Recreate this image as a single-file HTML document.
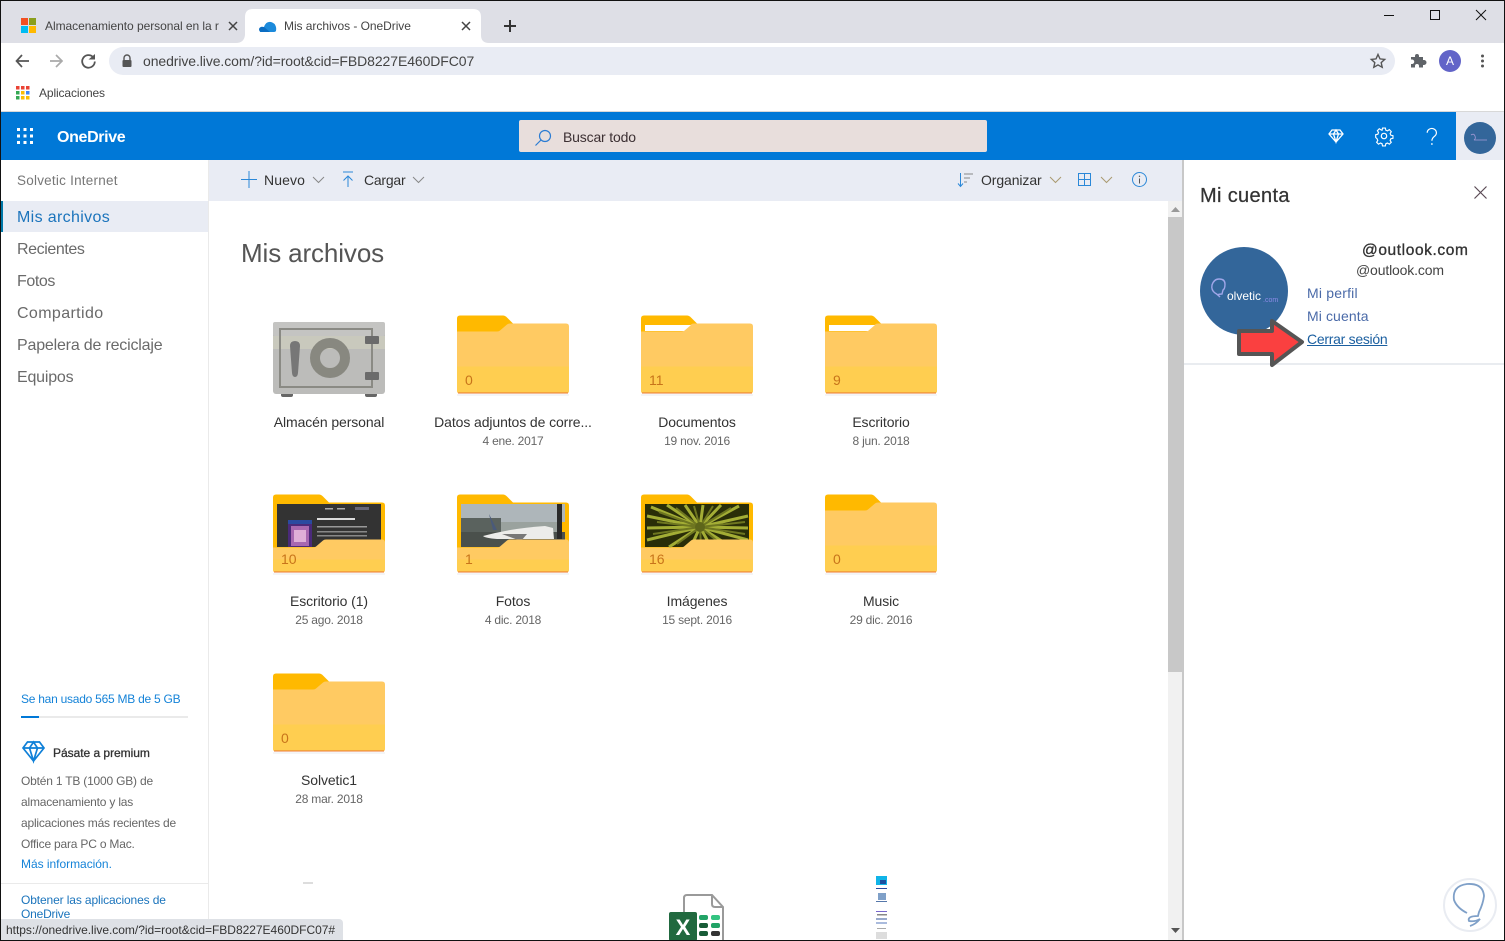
<!DOCTYPE html>
<html lang="es"><head><meta charset="utf-8"><title>Mis archivos - OneDrive</title>
<style>
html,body{margin:0;padding:0;width:1505px;height:941px;overflow:hidden;background:#fff;font-family:"Liberation Sans",sans-serif}
.a{position:absolute}
.t{position:absolute;white-space:nowrap;line-height:1;color:#333}
.c{position:absolute;width:184px;text-align:center;white-space:nowrap;line-height:1}
.n{font-size:14px;color:#333;letter-spacing:-.1px}
.d{font-size:12px;color:#666;letter-spacing:-.22px}
.k{position:absolute;font-size:14px;line-height:1;color:#c8741a}
.nav{font-size:16px;color:#6a6a6a;left:17px}
.side{font-size:12px;left:21px;color:#666;letter-spacing:-.2px}
svg{position:absolute;overflow:visible}
</style></head><body>
<svg width="0" height="0" style="left:0;top:0"><defs>
<symbol id="f" viewBox="0 0 112 79" overflow="visible">
<path d="M0 79h112v-1H0z" fill="#e9ebef" transform="translate(0,1)"/>
<path d="M3 0H46q2 0 4 2l6 6H0V3q0-3 3-3z" fill="#FFB900"/><path d="M0 8h56l-10 8H0z" fill="#FFB900"/>
<path d="M0 16H40q2 0 3-1l7-6q1-1 3-1h56q3 0 3 3V75q0 3-3 3H3q-3 0-3-3z" fill="#FFCA62"/>
<path d="M0 51h112V75q0 3-3 3H3q-3 0-3-3z" fill="#FFCE50"/><rect x="1" y="77" width="110" height="1" fill="#E8752D"/>
</symbol>
<symbol id="g" viewBox="0 0 112 79" overflow="visible">
<path d="M0 79h112v-1H0z" fill="#e9ebef" transform="translate(0,1)"/>
<path d="M3 0H46q2 0 4 2l6 6h53q3 0 3 3V60H0V3q0-3 3-3z" fill="#FFB900"/>
</symbol>
<symbol id="h" viewBox="0 0 112 79" overflow="visible">
<path d="M0 53H40q2 0 3-1l7-6q1-1 3-1h56q3 0 3 3V75q0 3-3 3H3q-3 0-3-3z" fill="#FFCA62"/>
<path d="M0 65h112V75q0 3-3 3H3q-3 0-3-3z" fill="#FFCE50"/><rect x="1" y="77" width="110" height="1" fill="#E8752D"/>
</symbol>
</defs></svg>

<!-- Tab strip -->
<div class="a" style="left:0;top:0;width:1505px;height:43px;background:#DEDFE6"></div>
<svg style="left:0;top:0" width="520" height="44"><path d="M236 43q8 0 9-8V17q0-8 8-8H473q8 0 8 8V35q0 8 8 8z" fill="#fff"/></svg>
<div class="a" style="left:21px;top:18px;width:7px;height:7px;background:#F25022"></div>
<div class="a" style="left:29px;top:18px;width:7px;height:7px;background:#8B9F1D"></div>
<div class="a" style="left:21px;top:26px;width:7px;height:7px;background:#00BCF2"></div>
<div class="a" style="left:29px;top:26px;width:7px;height:7px;background:#FFB900"></div>
<div class="t" style="left:45px;top:20px;font-size:12px;color:#444;letter-spacing:-.05px;width:174px;overflow:hidden">Almacenamiento personal en la r</div>
<svg style="left:228px;top:21px" width="10" height="10"><path d="M1 1l8 8M9 1l-8 8" stroke="#444" stroke-width="1.5"/></svg>
<svg style="left:259px;top:19px" width="18" height="14"><path d="M1 13q-1-5 4-5q2-6 7-5q4 1 5 5q1 5-2 5z" fill="#1B8ADB"/><path d="M0 10q1-3 5-2l6 5H3q-3 0-3-3z" fill="#0B6DC2"/></svg>
<div class="t" style="left:284px;top:20px;font-size:12px;color:#444;letter-spacing:-.05px">Mis archivos - OneDrive</div>
<svg style="left:461px;top:21px" width="10" height="10"><path d="M1 1l8 8M9 1l-8 8" stroke="#444" stroke-width="1.5"/></svg>
<svg style="left:503px;top:19px" width="14" height="14"><path d="M7 1v12M1 7h12" stroke="#333" stroke-width="2"/></svg>
<svg style="left:1384px;top:9px" width="110" height="14"><path d="M0 6.5h10" stroke="#111" stroke-width="1"/><rect x="46.5" y="1.5" width="9" height="9" fill="none" stroke="#111"/><path d="M92 1l10 10M102 1L92 11" stroke="#111"/></svg>

<!-- Toolbar -->
<svg style="left:15px;top:53px" width="85" height="16"><path d="M14 8H2M7 2L1.5 8 7 14" fill="none" stroke="#555" stroke-width="1.7"/><path d="M47 8H35M41 2l6 6-6 6" fill="none" stroke="#aaa" stroke-width="1.7"/><path d="M78 4a6.3 6.3 0 1 0 1.8 4.5" fill="none" stroke="#555" stroke-width="1.8"/><path d="M73.5 6.5H80V1z" fill="#555"/></svg>
<div class="a" style="left:109px;top:47px;width:1286px;height:28px;border-radius:14px;background:#E9ECF4"></div>
<svg style="left:121px;top:54px" width="12" height="14"><path d="M3 6V4a3 3 0 0 1 6 0v2" fill="none" stroke="#555" stroke-width="1.4"/><rect x="1.5" y="6" width="9" height="7" rx="1" fill="#555"/></svg>
<div class="t" style="left:143px;top:54px;font-size:14px;color:#444;letter-spacing:-.09px">onedrive.live.com/?id=root&amp;cid=FBD8227E460DFC07</div>
<svg style="left:1370px;top:53px" width="16" height="16"><path d="M8 1.5l2 4.4 4.7.5-3.5 3.2 1 4.7L8 11.9 3.800 14.300l1-4.700L1.300 6.400 6 5.900z" fill="none" stroke="#555" stroke-width="1.4"/></svg>
<svg style="left:1410px;top:53px" width="16" height="15"><path d="M1 4h4V3a2 2 0 0 1 4 0v1h4v3h1a2.500 2.500 0 0 1 0 5h-1v2.500H9V13a2 2 0 0 0-4 0v1.500H1V11h1a2.200 2.200 0 0 0 0-4.500H1z" fill="#5f6368"/></svg>
<div class="a" style="left:1439px;top:50px;width:22px;height:22px;border-radius:50%;background:#6264C8;color:#fff;font-size:12px;line-height:22px;text-align:center">A</div>
<svg style="left:1480px;top:54px" width="5" height="14"><circle cx="2.500" cy="2" r="1.500" fill="#555"/><circle cx="2.500" cy="7" r="1.500" fill="#555"/><circle cx="2.500" cy="12" r="1.500" fill="#555"/></svg>

<!-- Bookmarks -->
<svg style="left:16px;top:86px" width="14" height="14">
<g fill="#EA4335"><rect width="3.500" height="3.500"/><rect x="5" width="3.500" height="3.500"/><rect x="10" width="3.500" height="3.500"/></g>
<g><rect y="5" width="3.500" height="3.500" fill="#34A853"/><rect x="5" y="5" width="3.500" height="3.500" fill="#FBBC05"/><rect x="10" y="5" width="3.500" height="3.500" fill="#4285F4"/></g>
<g><rect y="10" width="3.500" height="3.500" fill="#34A853"/><rect x="5" y="10" width="3.500" height="3.500" fill="#FBBC05"/><rect x="10" y="10" width="3.500" height="3.500" fill="#FBBC05"/></g></svg>
<div class="t" style="left:39px;top:87px;font-size:12px;color:#444;letter-spacing:-.12px">Aplicaciones</div>
<div class="a" style="left:0;top:111px;width:1505px;height:1px;background:#D8D8D8"></div>

<!-- Blue header -->
<div class="a" style="left:0;top:112px;width:1456px;height:48px;background:#0078D7"></div>
<div class="a" style="left:1456px;top:112px;width:49px;height:48px;background:#E9ECF4"></div>
<svg style="left:17px;top:128px" width="16" height="16" fill="#fff"><rect width="3" height="3"/><rect x="6.500" width="3" height="3"/><rect x="13" width="3" height="3"/><rect y="6.500" width="3" height="3"/><rect x="6.500" y="6.500" width="3" height="3"/><rect x="13" y="6.500" width="3" height="3"/><rect y="13" width="3" height="3"/><rect x="6.500" y="13" width="3" height="3"/><rect x="13" y="13" width="3" height="3"/></svg>
<div class="t" style="left:57px;top:130px;font-size:16px;font-weight:bold;color:#fff;letter-spacing:-.35px">OneDrive</div>
<div class="a" style="left:519px;top:120px;width:468px;height:32px;border-radius:2px;background:#E8DEDC"></div>
<svg style="left:534px;top:129px" width="18" height="18"><circle cx="11" cy="7" r="5.500" fill="none" stroke="#2B7CD3" stroke-width="1.200"/><path d="M7 11l-5.500 5.500" stroke="#2B7CD3" stroke-width="1.200"/></svg>
<div class="t" style="left:563px;top:130px;font-size:14px;color:#3c3033;letter-spacing:-.17px">Buscar todo</div>
<svg style="left:1328px;top:129px" width="16" height="14"><path d="M4 1h8l3 4-7 8-7-8z M1 5h14 M5.500 5L8 13l2.500-8L8 1 5.500 5" fill="none" stroke="#fff" stroke-width="1.300"/></svg>
<svg style="left:1375px;top:127px" width="18" height="18"><circle cx="9" cy="9" r="2.700" fill="none" stroke="#fff" stroke-width="1.200"/><path d="M7.500 1h3l.5 2.300 1.700.7 2-1.300 2 2.100-1.200 2 .7 1.700 2.300.5v2.800l-2.300.5-.7 1.700 1.200 2-2 2-2-1.200-1.700.7-.5 2.300h-3l-.5-2.300-1.700-.7-2 1.200-2-2 1.200-2-.7-1.700L.3 10.800V8l2.300-.5.700-1.700-1.200-2 2-2.100 2 1.300L7 3.300z" transform="translate(.4 .1) scale(.95)" fill="none" stroke="#fff" stroke-width="1.200"/></svg>
<svg style="left:1426px;top:128px" width="12" height="18"><path d="M1.200 4.800a4.600 4.300 0 1 1 7.400 3.400c-1.700 1.300-2.700 2.300-2.700 4.500" fill="none" stroke="#fff" stroke-width="1.200"/><circle cx="5.900" cy="16" r=".9" fill="#fff"/></svg>
<div class="a" style="left:1464px;top:122px;width:32px;height:32px;border-radius:50%;background:#33669A"></div>
<svg style="left:1469px;top:133px" width="22" height="10"><path d="M2 2q3-2 4 1t-1 4h13" fill="none" stroke="#a89ad8" stroke-width=".8"/></svg>

<!-- Command bar -->
<div class="a" style="left:209px;top:160px;width:973px;height:41px;background:#E9ECF4"></div>
<svg style="left:241px;top:171px" width="17" height="17"><path d="M8 0v17M0 8.500h16" stroke="#2B88D8" stroke-width="1"/></svg>
<div class="t" style="left:264px;top:173px;font-size:14px;color:#333;letter-spacing:.1px">Nuevo</div>
<svg style="left:312px;top:176px" width="13" height="8"><path d="M1 1l5.500 5.500L12 1" fill="none" stroke="#888"/></svg>
<svg style="left:342px;top:171px" width="12" height="17"><path d="M1 1h10M6 16V5M1.500 9.500L6 5l4.500 4.500" fill="none" stroke="#2B88D8"/></svg>
<div class="t" style="left:364px;top:173px;font-size:14px;color:#333;letter-spacing:-.23px">Cargar</div>
<svg style="left:412px;top:176px" width="13" height="8"><path d="M1 1l5.500 5.500L12 1" fill="none" stroke="#888"/></svg>
<svg style="left:957px;top:172px" width="17" height="16"><path d="M3.500 1v13M1 11.500L3.500 14.500 6 11.500" fill="none" stroke="#2B88D8"/><path d="M7 2h9M7 6h6M7 10h3" stroke="#888"/></svg>
<div class="t" style="left:981px;top:173px;font-size:14px;color:#333;letter-spacing:-.1px">Organizar</div>
<svg style="left:1049px;top:176px" width="13" height="8"><path d="M1 1l5.500 5.500L12 1" fill="none" stroke="#aa9a70"/></svg>
<svg style="left:1078px;top:173px" width="13" height="13"><path d="M.5.500h12v12H.5zM6.500.500v12M.5 6.500h12" fill="none" stroke="#2B88D8"/></svg>
<svg style="left:1100px;top:176px" width="13" height="8"><path d="M1 1l5.500 5.500L12 1" fill="none" stroke="#aa9a70"/></svg>
<svg style="left:1132px;top:172px" width="15" height="15"><circle cx="7.500" cy="7.500" r="7" fill="none" stroke="#2B88D8"/><path d="M7.500 6.500v5" stroke="#555"/><circle cx="7.500" cy="4.300" r=".7" fill="#555"/></svg>

<!-- Sidebar -->
<div class="a" style="left:208px;top:160px;width:1px;height:781px;background:#EAEAEA"></div>
<div class="t" style="left:17px;top:174px;font-size:13.500px;color:#777;letter-spacing:.23px">Solvetic Internet</div>
<div class="a" style="left:1px;top:201px;width:207px;height:31px;background:#E9ECF4"></div>
<div class="a" style="left:1px;top:201px;width:2px;height:31px;background:#0078A8"></div>
<div class="t nav" style="top:210px;color:#1B74BC;letter-spacing:.35px">Mis archivos</div>
<div class="t nav" style="top:242px;letter-spacing:-.41px">Recientes</div>
<div class="t nav" style="top:274px;letter-spacing:-.42px">Fotos</div>
<div class="t nav" style="top:306px;letter-spacing:.38px">Compartido</div>
<div class="t nav" style="top:338px;letter-spacing:-.19px">Papelera de reciclaje</div>
<div class="t nav" style="top:370px;letter-spacing:-.2px">Equipos</div>

<div class="t side" style="top:693px;color:#1583D8;letter-spacing:-.25px">Se han usado 565 MB de 5 GB</div>
<div class="a" style="left:21px;top:716px;width:167px;height:2px;background:#EAEAEA"></div>
<div class="a" style="left:21px;top:716px;width:18px;height:2px;background:#0078D7"></div>
<svg style="left:22px;top:741px" width="23" height="21"><path d="M5.500 1h12l4.500 6-10.500 13L1 7zM1 7h21M7.500 7l4 13 4-13-4-6z" fill="none" stroke="#0F80D8" stroke-width="1.700"/></svg>
<div class="t" style="left:53px;top:747px;font-size:12px;color:#333;letter-spacing:-.03px;-webkit-text-stroke:.3px #333">Pásate a premium</div>
<div class="t side" style="top:775px">Obtén 1 TB (1000 GB) de</div>
<div class="t side" style="top:796px">almacenamiento y las</div>
<div class="t side" style="top:817px">aplicaciones más recientes de</div>
<div class="t side" style="top:838px">Office para PC o Mac.</div>
<div class="t side" style="top:858px;color:#1583D8;letter-spacing:-.03px">Más información.</div>
<div class="a" style="left:1px;top:883px;width:207px;height:1px;background:#EAEAEA"></div>
<div class="t side" style="top:894px;color:#1B74BC;letter-spacing:-.12px">Obtener las aplicaciones de</div>
<div class="t side" style="top:908px;color:#1B74BC">OneDrive</div>

<!-- Main -->
<div class="t" style="left:241px;top:240px;font-size:26px;color:#555;letter-spacing:-.12px">Mis archivos</div>

<!-- Safe -->
<svg style="left:273px;top:322px" width="112" height="76">
<rect x="8" y="70" width="12" height="5" rx="2" fill="#666"/><rect x="92" y="70" width="12" height="5" rx="2" fill="#666"/>
<rect width="112" height="72" rx="3" fill="#BCBCBA"/><rect y="14" width="112" height="13" fill="#C9C9BD"/><rect width="112" height="14" rx="2" fill="#C4C4C2"/>
<rect x="7" y="7" width="92" height="58" fill="none" stroke="#8A8A84" stroke-width="2"/>
<path d="M17 24q0-5 5-5t5 5l-2 27q-.5 4-3 4t-3-4z" fill="#777"/>
<circle cx="57" cy="36" r="15" fill="none" stroke="#888880" stroke-width="10"/>
<rect x="92" y="14" width="14" height="8" rx="1" fill="#6B6B6B"/><rect x="92" y="50" width="14" height="8" rx="1" fill="#6B6B6B"/>
</svg>
<div class="c n" style="left:237px;top:415px">Almacén personal</div>

<!-- Row 1 -->
<svg style="left:457px;top:315px" width="112" height="80"><use href="#f"/></svg>
<div class="k" style="left:465px;top:373px">0</div>
<div class="c n" style="left:421px;top:415px">Datos adjuntos de corre...</div>
<div class="c d" style="left:421px;top:435px">4 ene. 2017</div>

<svg style="left:641px;top:315px" width="112" height="80"><use href="#f"/><path d="M4 10h46l-7 6H4z" fill="#fff"/></svg>
<div class="k" style="left:649px;top:373px">11</div>
<div class="c n" style="left:605px;top:415px">Documentos</div>
<div class="c d" style="left:605px;top:435px">19 nov. 2016</div>

<svg style="left:825px;top:315px" width="112" height="80"><use href="#f"/><path d="M4 10h46l-7 6H4z" fill="#fff"/></svg>
<div class="k" style="left:833px;top:373px">9</div>
<div class="c n" style="left:789px;top:415px">Escritorio</div>
<div class="c d" style="left:789px;top:435px">8 jun. 2018</div>

<!-- Row 2 -->
<svg style="left:273px;top:494px" width="112" height="80"><use href="#g"/>
<rect x="4" y="10" width="104" height="43" fill="#333"/>
<rect x="15" y="26" width="24" height="27" fill="#4A2A7A"/><rect x="18" y="32" width="18" height="20" fill="#A868B0"/><rect x="21" y="36" width="12" height="12" fill="#E0B0D8"/><rect x="15" y="26" width="24" height="4" fill="#2A4AA0"/>
<rect x="44" y="24" width="38" height="2" fill="#ddd"/><rect x="44" y="32" width="50" height="1.500" fill="#999"/><rect x="44" y="37" width="50" height="1.500" fill="#888"/><rect x="44" y="41" width="50" height="1.500" fill="#888"/>
<rect x="52" y="14" width="8" height="1.500" fill="#aaa"/><rect x="64" y="14" width="8" height="1.500" fill="#aaa"/><rect x="82" y="13" width="14" height="3" fill="#667"/>
<use href="#h"/></svg>
<div class="k" style="left:281px;top:552px">10</div>
<div class="c n" style="left:237px;top:594px">Escritorio (1)</div>
<div class="c d" style="left:237px;top:614px">25 ago. 2018</div>

<svg style="left:457px;top:494px" width="112" height="80"><use href="#g"/>
<rect x="4" y="10" width="104" height="18" fill="#AEB6BA"/><rect x="4" y="24" width="40" height="14" fill="#5A625E"/><rect x="44" y="28" width="60" height="14" fill="#9AA29E"/><rect x="4" y="38" width="104" height="15" fill="#4A504C"/>
<rect x="100" y="10" width="5" height="35" fill="#2a2a2a"/>
<path d="M26 42q30-8 62-10l8 2 1 11H40q-12-1-14-3z" fill="#ECECEA"/><path d="M32 20l8 16h-4z" fill="#4A5A7A"/><path d="M45 40h25l-6 7z" fill="#777"/>
<use href="#h"/></svg>
<div class="k" style="left:465px;top:552px">1</div>
<div class="c n" style="left:421px;top:594px">Fotos</div>
<div class="c d" style="left:421px;top:614px">4 dic. 2018</div>

<svg style="left:641px;top:494px" width="112" height="80"><use href="#g"/>
<rect x="4" y="10" width="104" height="43" fill="#2A2E08"/>
<g clip-path="none" fill="none" stroke="#A3AD35" stroke-width="3">
<path d="M59 33L6 22M59 33L10 13M59 33L26 11M59 33L44 11M59 33L62 11M59 33L80 11M59 33L98 12M59 33L107 22M59 33L107 34M59 33L107 46M59 33L90 53M59 33L70 53M59 33L50 53M59 33L28 53M59 33L6 46M59 33L6 34"/></g>
<g fill="none" stroke="#6E7620" stroke-width="2"><path d="M59 33L16 28M59 33L18 18M59 33L35 14M59 33L53 12M59 33L72 12M59 33L90 14M59 33L104 28M59 33L104 40M59 33L80 50M59 33L60 52M59 33L36 50M59 33L12 40"/></g>
<circle cx="59" cy="33" r="5" fill="#5E661A"/>
<use href="#h"/></svg>
<div class="k" style="left:649px;top:552px">16</div>
<div class="c n" style="left:605px;top:594px">Imágenes</div>
<div class="c d" style="left:605px;top:614px">15 sept. 2016</div>

<svg style="left:825px;top:494px" width="112" height="80"><use href="#f"/></svg>
<div class="k" style="left:833px;top:552px">0</div>
<div class="c n" style="left:789px;top:594px">Music</div>
<div class="c d" style="left:789px;top:614px">29 dic. 2016</div>

<!-- Row 3 -->
<svg style="left:273px;top:673px" width="112" height="80"><use href="#f"/></svg>
<div class="k" style="left:281px;top:731px">0</div>
<div class="c n" style="left:237px;top:773px">Solvetic1</div>
<div class="c d" style="left:237px;top:793px">28 mar. 2018</div>

<!-- Row 4 partial -->
<div class="a" style="left:303px;top:882px;width:10px;height:2px;background:#ddd"></div>
<svg style="left:669px;top:894px" width="58" height="47">
<path d="M15 46V4q0-3 3-3h25l11 12v33" fill="#fff" stroke="#9a9a9a" stroke-width="2"/><path d="M43 1v9q0 3 3 3h8" fill="none" stroke="#9a9a9a" stroke-width="2"/>
<rect x="0" y="18" width="28" height="29" rx="2" fill="#21693F"/>
<text x="14" y="41" font-family="Liberation Sans" font-size="22" font-weight="bold" fill="#fff" text-anchor="middle">X</text>
<rect x="30" y="21" width="9" height="5" rx="2" fill="#21A366"/><rect x="42" y="21" width="9" height="5" rx="2" fill="#33C481"/>
<rect x="30" y="29" width="9" height="5" rx="2" fill="#185C37"/><rect x="42" y="29" width="9" height="5" rx="2" fill="#21A366"/>
<rect x="30" y="37" width="9" height="5" rx="2" fill="#185C37"/><rect x="42" y="37" width="9" height="5" rx="2" fill="#333"/>
</svg>
<svg style="left:875px;top:876px" width="13" height="64">
<rect x="1" y="0" width="11" height="9" fill="#10B4E8"/><rect x="5" y="4" width="6" height="4" fill="#1B4FA0"/>
<rect x="1" y="12" width="11" height="1" fill="#2A4AA0"/><rect x="3" y="17" width="8" height="7" fill="#7FA0C8"/><rect x="1" y="25" width="11" height="1" fill="#5577aa"/>
<rect x="1" y="35" width="11" height="1" fill="#7766cc"/><rect x="2" y="38" width="10" height="1.500" fill="#888"/><rect x="1" y="42" width="11" height="2" fill="#99AACC"/><rect x="1" y="46" width="11" height="2" fill="#aabbdd"/><rect x="2" y="52" width="9" height="1" fill="#aaa"/><rect x="1" y="56" width="11" height="7" fill="#ddd"/>
</svg>

<!-- Scrollbar -->
<div class="a" style="left:1168px;top:201px;width:14px;height:739px;background:#F1F1F1"></div>
<div class="a" style="left:1168px;top:217px;width:14px;height:455px;background:#C8C8C8"></div>
<svg style="left:1171px;top:207px" width="9" height="6"><path d="M4.500 0L9 5H0z" fill="#999"/></svg>
<svg style="left:1171px;top:928px" width="9" height="6"><path d="M4.500 5L9 0H0z" fill="#555"/></svg>

<!-- Right panel -->
<div class="a" style="left:1182px;top:160px;width:2px;height:781px;background:#C8C8C8"></div>
<div class="a" style="left:1184px;top:160px;width:321px;height:781px;background:#fff"></div>
<div class="t" style="left:1200px;top:186px;font-size:20px;color:#333;letter-spacing:.35px;-webkit-text-stroke:.25px #333">Mi cuenta</div>
<svg style="left:1474px;top:186px" width="13" height="13"><path d="M.5.500l12 12M12.500.500l-12 12" stroke="#5a4a55" stroke-width="1.200"/></svg>
<div class="a" style="left:1200px;top:247px;width:88px;height:88px;border-radius:50%;background:#33669A"></div>
<svg style="left:1209px;top:277px" width="24" height="24"><path d="M11 20q-3-3-5-4-4-3-3-8 2-6 7-6 6 0 6 5t-2 6l-1 4q-3 0-5 1" fill="none" stroke="#9FA6E8" stroke-width="1.400"/></svg>
<div class="t" style="left:1227px;top:290px;font-size:12px;color:#fff">olvetic</div>
<div class="t" style="left:1263px;top:297px;font-size:7px;color:#8D8BE8">.com</div>
<div class="t" style="left:1362px;top:243px;font-size:15.500px;color:#333;letter-spacing:.6px;-webkit-text-stroke:.35px #333">@outlook.com</div>
<div class="t" style="left:1356px;top:263px;font-size:14px;color:#444;letter-spacing:-.15px">@outlook.com</div>
<div class="t" style="left:1307px;top:286px;font-size:14px;color:#4a6aa8;letter-spacing:.2px">Mi perfil</div>
<div class="t" style="left:1307px;top:309px;font-size:14px;color:#4a6aa8;letter-spacing:.1px">Mi cuenta</div>
<div class="t" style="left:1307px;top:332px;font-size:14px;color:#1B5FA0;letter-spacing:-.28px;text-decoration:underline">Cerrar sesión</div>
<div class="a" style="left:1184px;top:363px;width:321px;height:2px;background:#E9ECF0"></div>
<svg style="left:1236px;top:318px" width="70" height="50"><path d="M3 13H36V3L66 24 36 47V36H3z" fill="#FA4040" stroke="#555" stroke-width="4" stroke-linejoin="round"/></svg>

<!-- Watermark -->
<svg style="left:1443px;top:878px" width="56" height="56"><circle cx="27" cy="27" r="26" fill="#fff" fill-opacity=".9" stroke="#E9ECF2" stroke-width="2"/>
<path d="M24 35Q14 30 11 22Q9 8 24 6Q40 5 41 18Q40 26 36 34L35 38Q24 38 26 43Q32 44 37 41Q33 46 27 48" fill="none" stroke="#7FA0C8" stroke-width="1.800"/></svg>

<!-- Status bubble -->
<div class="a" style="left:1px;top:919px;width:342px;height:21px;background:#DEE1E6;border-top-right-radius:4px"></div>
<div class="t" style="left:6px;top:924px;font-size:12px;color:#333;letter-spacing:-.02px">https://onedrive.live.com/?id=root&amp;cid=FBD8227E460DFC07#</div>

<!-- Window border -->
<div class="a" style="left:0;top:0;width:1505px;height:1px;background:#111"></div>
<div class="a" style="left:0;top:940px;width:1505px;height:1px;background:#111"></div>
<div class="a" style="left:0;top:0;width:1px;height:941px;background:#111"></div>
<div class="a" style="left:1504px;top:0;width:1px;height:941px;background:#111"></div>
</body></html>
